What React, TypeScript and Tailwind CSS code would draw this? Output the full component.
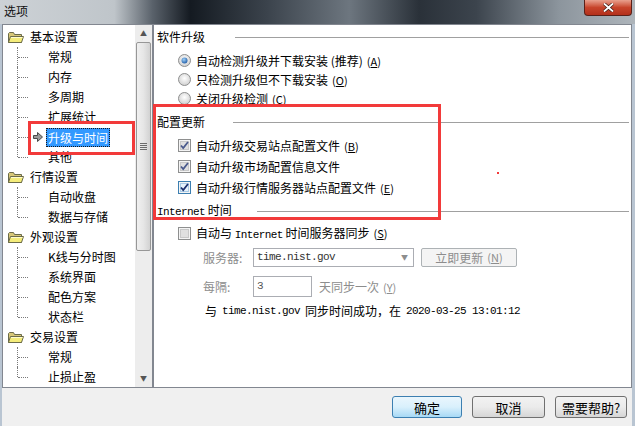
import type { ReactNode } from "react";

type Group = { name: string; items: string[] };

const GROUPS: Group[] = [
  { name: "基本设置", items: ["常规", "内存", "多周期", "扩展统计", "升级与时间", "其他"] },
  { name: "行情设置", items: ["自动收盘", "数据与存储"] },
  { name: "外观设置", items: ["K线与分时图", "系统界面", "配色方案", "状态栏"] },
  { name: "交易设置", items: ["常规", "止损止盈"] },
];

const SELECTED = "升级与时间";
const MONO = "font-['Liberation_Mono',monospace] text-[11px] tracking-[-0.6px]";

function Folder() {
  return (
    <svg width="16" height="13" viewBox="0 0 16 13">
      <path d="M0.5 2.5 L0.5 11.5 L13.5 11.5 L13.5 3.5 L6.5 3.5 L5.5 1.5 L1.5 1.5 Z" fill="#d8c878" stroke="#6b6b4a" />
      <path d="M2.5 5.5 L15.5 5.5 L13.5 11.5 L0.5 11.5 Z" fill="#f4ec7a" stroke="#6b6b4a" />
      <path d="M3 6.5 L14.5 6.5" stroke="#fffbd0" />
    </svg>
  );
}

function Arrow() {
  return (
    <svg width="10" height="10" viewBox="0 0 10 10">
      <path d="M0.5 3.5 L4.5 3.5 L4.5 0.5 L9.5 5 L4.5 9.5 L4.5 6.5 L0.5 6.5 Z" fill="#9a9a9a" stroke="#4a4a4a" />
    </svg>
  );
}

function Radio({ on }: { on?: boolean }) {
  return (
    <svg width="13" height="13" viewBox="0 0 13 13">
      <defs>
        <radialGradient id="rg" cx="50%" cy="40%" r="60%">
          <stop offset="0" stopColor="#ffffff" />
          <stop offset="1" stopColor="#cfcfcf" />
        </radialGradient>
        <radialGradient id="rb" cx="40%" cy="35%" r="70%">
          <stop offset="0" stopColor="#9fd0f6" />
          <stop offset="1" stopColor="#1d5aa6" />
        </radialGradient>
      </defs>
      <circle cx="6.5" cy="6.5" r="6" fill="url(#rg)" stroke="#8e8f8f" />
      {on ? <circle cx="6.5" cy="6.5" r="3" fill="url(#rb)" /> : null}
    </svg>
  );
}

function Check({ on, strong }: { on?: boolean; strong?: boolean }) {
  return (
    <svg width="13" height="13" viewBox="0 0 13 13">
      <rect x="0.5" y="0.5" width="12" height="12" fill="#f4f4f4" stroke={strong ? "#3c7fb1" : "#8e8f8f"} />
      <rect x="2.5" y="2.5" width="8" height="8" fill={strong ? "#e6f2fb" : "#e0e0e0"} stroke={strong ? "#a9cbe6" : "#c8c8c8"} />
      {on ? (
        <path d="M3 6.5 L5.2 9 L10 3" fill="none" stroke={strong ? "#1c2f6e" : "#4a5a8c"} strokeWidth="1.8" />
      ) : null}
    </svg>
  );
}

function Key({ k }: { k: string }) {
  return (
    <span className="ml-[4px] text-[11px]">
      (<span className="underline">{k}</span>)
    </span>
  );
}

function Header({ children, lineFrom }: { children: ReactNode; lineFrom: number }) {
  return (
    <div className="flex h-[16px] items-center">
      <div style={{ width: lineFrom }} className="shrink-0 whitespace-nowrap">
        {children}
      </div>
      <div className="mr-[2px] h-px flex-1 bg-[#a0a0a0]" />
    </div>
  );
}

function Dots({ last }: { last: boolean }) {
  return (
    <div className="relative h-[20px] w-[26px] shrink-0">
      <div
        className={
          last
            ? "absolute left-[14px] top-0 h-[10px] border-l border-dotted border-[#7a7a7a]"
            : "absolute left-[14px] top-0 h-[20px] border-l border-dotted border-[#7a7a7a]"
        }
      />
      <div className="absolute left-[15px] top-[10px] w-[10px] border-t border-dotted border-[#7a7a7a]" />
    </div>
  );
}

function Tree() {
  return (
    <div className="flex h-full w-[151px] shrink-0 border border-[#828790] bg-white">
      <div className="flex-1 overflow-hidden pt-[2px]">
        {GROUPS.map((g) => (
          <div key={g.name}>
            <div className="flex h-[20px] items-center">
              <div className="ml-[5px] mr-[6px] flex w-[16px]">
                <Folder />
              </div>
              <span>{g.name}</span>
            </div>
            {g.items.map((it, i) => (
              <div key={g.name + it} className="flex h-[20px] items-center">
                <Dots last={i === g.items.length - 1} />
                <div className="flex w-[17px] justify-center">{it === SELECTED ? <Arrow /> : null}</div>
                {it === SELECTED ? (
                  <span className="border border-dotted border-[#1a1a1a] bg-[#3399ff] px-[1px] leading-[17px] text-white">
                    {it}
                  </span>
                ) : (
                  <span className="pl-[2px]">{it}</span>
                )}
              </div>
            ))}
          </div>
        ))}
      </div>
      <div className="flex w-[17px] flex-col items-center bg-[#ededed]">
        <div className="flex h-[17px] items-center text-[7px] text-[#555]">▲</div>
        <div className="flex h-[209px] w-[15px] flex-col items-center justify-center rounded-[2px] border border-[#979797] bg-gradient-to-r from-[#f0f0f0] via-[#e6e6e6] to-[#d2d2d2]">
          <div className="mb-[1px] h-px w-[7px] bg-[#6b6b6b]" />
          <div className="mb-[1px] h-px w-[7px] bg-[#6b6b6b]" />
          <div className="mb-[1px] h-px w-[7px] bg-[#6b6b6b]" />
          <div className="h-px w-[7px] bg-[#6b6b6b]" />
        </div>
        <div className="flex-1" />
        <div className="flex h-[17px] items-center text-[7px] text-[#555]">▼</div>
      </div>
    </div>
  );
}

function WinButton({ children, primary, w }: { children: ReactNode; primary?: boolean; w: string }) {
  return (
    <div
      className={
        primary
          ? `${w} flex h-[22px] items-center justify-center rounded-[3px] border border-[#3c7fb1] bg-gradient-to-b from-[#eaf6fd] via-[#d9f0fc] to-[#a7d9f5] text-[13px]`
          : `${w} flex h-[22px] items-center justify-center rounded-[3px] border border-[#707070] bg-gradient-to-b from-[#f2f2f2] via-[#ebebeb] to-[#d6d6d6] text-[13px]`
      }
    >
      {children}
    </div>
  );
}

export default function App() {
  return (
    <div className="relative flex h-[426px] w-[635px] flex-col overflow-hidden bg-[#f0f0f0] font-['Noto_Sans_CJK_SC',sans-serif] text-[12px] leading-none text-black">
      <div className="flex h-[24px] shrink-0 items-start justify-between bg-[linear-gradient(to_right,#cdd2d6_0%,#bfc5ca_18%,#5a626b_24%,#141a21_30%,#3b434c_42%,#6d767f_55%,#2a3139_66%,#3c444d_75%,#8c959d_88%,#aeb5bb_100%)]">
        <span className="ml-[4px] mt-[5px] text-[12px] text-[#101010]">选项</span>
        <div className="mr-[3px] flex h-[16px] w-[48px] items-center justify-center rounded-b-[4px] border border-t-0 border-[#5a2018] bg-gradient-to-b from-[#e8a08e] via-[#c7442b] to-[#b3301b]">
          <svg width="11" height="9" viewBox="0 0 11 9">
            <path d="M1 0.5 L5.5 4.5 L10 0.5 M1 8.5 L5.5 4.5 L10 8.5" stroke="#3a1a14" strokeWidth="3.2" fill="none" />
            <path d="M1 0.5 L5.5 4.5 L10 0.5 M1 8.5 L5.5 4.5 L10 8.5" stroke="#ffffff" strokeWidth="1.8" fill="none" />
          </svg>
        </div>
      </div>
      <div className="flex flex-1 flex-col border-l-2 border-r-[3px] border-[#b9c5d2]">
        <div className="flex h-[364px] shrink-0">
          <Tree />
          <div className="flex flex-1 flex-col border border-[#828790] bg-white pl-[3px] pt-[4px]">
            <Header lineFrom={78}>软件升级</Header>
            <div className="ml-[21px] mt-[9px] flex flex-col gap-[6px]">
              <div className="flex h-[13px] items-center gap-[5px]">
                <Radio on />
                <span>
                  自动检测升级并下载安装 (推荐)
                  <Key k="A" />
                </span>
              </div>
              <div className="flex h-[13px] items-center gap-[5px]">
                <Radio />
                <span>
                  只检测升级但不下载安装
                  <Key k="O" />
                </span>
              </div>
              <div className="flex h-[13px] items-center gap-[5px]">
                <Radio />
                <span>
                  关闭升级检测
                  <Key k="C" />
                </span>
              </div>
            </div>
            <div className="mt-[9px]">
              <Header lineFrom={76}>配置更新</Header>
            </div>
            <div className="ml-[21px] mt-[9px] flex flex-col gap-[8px]">
              <div className="flex h-[13px] items-center gap-[5px]">
                <Check on />
                <span>
                  自动升级交易站点配置文件
                  <Key k="B" />
                </span>
              </div>
              <div className="flex h-[13px] items-center gap-[5px]">
                <Check on />
                <span>自动升级市场配置信息文件</span>
              </div>
              <div className="flex h-[13px] items-center gap-[5px]">
                <Check on strong />
                <span>
                  自动升级行情服务器站点配置文件
                  <Key k="E" />
                </span>
              </div>
            </div>
            <div className="mt-[9px]">
              <Header lineFrom={100}>
                <span className={MONO}>Internet</span> 时间
              </Header>
            </div>
            <div className="ml-[21px] mt-[8px] flex h-[13px] items-center gap-[5px]">
              <Check />
              <span>
                自动与 <span className={MONO}>Internet</span> 时间服务器同步
                <Key k="S" />
              </span>
            </div>
            <div className="ml-[46px] mt-[8px] flex items-center text-[#8d8d8d]">
              <span className="w-[50px]">服务器:</span>
              <div className="flex h-[19px] w-[161px] items-center justify-between border border-[#abadb3] bg-white pl-[3px] pr-[5px] text-[#333]">
                <span className={MONO}>time.nist.gov</span>
                <span className="text-[7px] text-[#8d8d8d]">▼</span>
              </div>
              <div className="ml-[7px] flex h-[19px] w-[96px] items-center justify-center rounded-[2px] border border-[#adb2b5] bg-[#f4f4f4]">
                立即更新
                <Key k="N" />
              </div>
            </div>
            <div className="ml-[46px] mt-[9px] flex items-center text-[#8d8d8d]">
              <span className="w-[50px]">每隔:</span>
              <div className="flex h-[21px] w-[59px] items-center border border-[#abadb3] bg-white pl-[3px] text-[#555]">
                <span className={MONO}>3</span>
              </div>
              <span className="ml-[7px]">
                天同步一次
                <Key k="Y" />
              </span>
            </div>
            <div className="ml-[48px] mt-[8px] flex items-center whitespace-nowrap">
              与 <span className={`${MONO} mx-[5px]`}>time.nist.gov</span> 同步时间成功，在
              <span className={`${MONO} ml-[5px]`}>2020-03-25 13:01:12</span>
            </div>
          </div>
        </div>
        <div className="flex flex-1 items-start justify-end gap-[10px] pr-[5px] pt-[8px]">
          <WinButton primary w="w-[70px]">确定</WinButton>
          <WinButton w="w-[73px]">取消</WinButton>
          <WinButton w="w-[72px]">需要帮助?</WinButton>
        </div>
      </div>

      <div className="absolute left-[28px] top-[121px] h-[34px] w-[107px] border-[3px] border-[#f23a3a]" />
      <div className="absolute left-[153px] top-[104px] h-[116px] w-[288px] border-[3px] border-[#f23a3a]" />
      <div className="absolute left-[497px] top-[172px] h-[2px] w-[2px] bg-[#f23a3a]" />
    </div>
  );
}
